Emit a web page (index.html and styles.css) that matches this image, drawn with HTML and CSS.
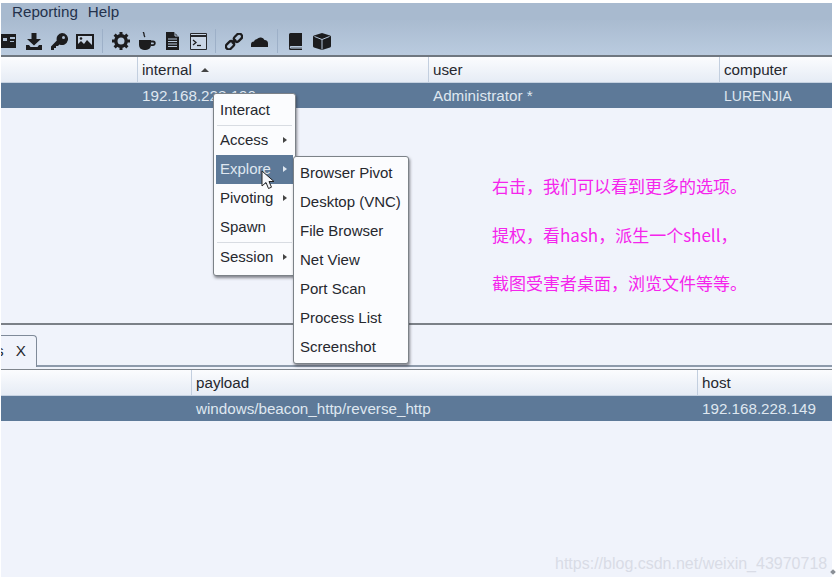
FILE: index.html
```html
<!DOCTYPE html>
<html lang="en">
<head>
  <meta charset="UTF-8">
  <title>Cobalt Strike</title>
  <link rel="stylesheet" href="styles.css">
</head>
<body>
  <div class="window">
    <div class="menubar">
      <span class="menu">Reporting</span>
      <span class="menu">Help</span>
    </div>

    <div class="toolbar">
      <!-- listeners card -->
      <svg width="15" height="14" viewBox="0 0 15 14"><path d="M0 0h15v14H0z" fill="#1c1c1e"/><path d="M2 4h4v3H2zM9 3h5v2H9zM9 7h4v1H9z" fill="#aebfd4"/></svg>
      <!-- download -->
      <svg class="gap10" width="16" height="17" viewBox="0 0 16 17"><path d="M5.500 0h5v6H15l-7 6.500L1 6h4.500z" fill="#1c1c1e"/><path d="M0 12h3l1.500 2h7L13 12h3v5H0z" fill="#1c1c1e"/></svg>
      <!-- key -->
      <svg width="17" height="17" viewBox="0 0 17 17"><path d="M11 0a6 6 0 1 1-2.600 11.400L7 13H5v2H3v2H0v-3.500l5.800-6A6 6 0 0 1 11 0z" fill="#1c1c1e"/><circle cx="12.500" cy="4.500" r="1.500" fill="#aebfd4"/></svg>
      <!-- picture -->
      <svg class="gap8" width="18" height="15" viewBox="0 0 18 15"><path d="M0 0h18v15H0z" fill="#1c1c1e"/><path d="M2 2h14v11H2z" fill="#c5d2e2"/><path d="M2 13V10l3-3 3 3 3-4 5 5v2z" fill="#1c1c1e"/><circle cx="5" cy="4.500" r="1.300" fill="#1c1c1e"/></svg>
      <i class="sep gap8"></i>
      <!-- gear -->
      <svg width="18" height="18" viewBox="0 0 18 18"><circle cx="9" cy="9" r="5.200" fill="none" stroke="#1c1c1e" stroke-width="3.400"/><path d="M9 0v4M9 14v4M0 9h4M14 9h4M2.600 2.600l2.800 2.800M12.600 12.600l2.800 2.800M15.400 2.600l-2.800 2.800M5.400 12.600l-2.800 2.800" stroke="#1c1c1e" stroke-width="3"/></svg>
      <!-- cup with steam -->
      <svg width="17" height="18" viewBox="0 0 17 18"><path d="M0 8h12v5a5 5 0 0 1-5 5H5a5 5 0 0 1-5-5z" fill="#1c1c1e"/><path d="M12 9.500h2a1.800 1.800 0 0 1 0 3.600h-2" fill="none" stroke="#1c1c1e" stroke-width="1.800"/><path d="M4 0c2 1.500 0 3 2 5" fill="none" stroke="#1c1c1e" stroke-width="1.300"/></svg>
      <!-- text document -->
      <svg class="gap10" width="13" height="18" viewBox="0 0 13 18"><path d="M0 0h8l5 5v13H0z" fill="#1c1c1e"/><path d="M9 .5v3.500h3.500" fill="none" stroke="#b5c6da"/><path d="M2 7h9M2 9.500h9M2 12h9M2 14.500h9" stroke="#b5c6da"/></svg>
      <!-- console -->
      <svg class="gap11" width="17" height="17" viewBox="0 0 17 17"><path d="M.5.500h16v16H.5z" fill="#c9d6e6" stroke="#26282c"/><path d="M.5 3h16" stroke="#26282c" stroke-width="2"/><path d="M3 7l3 2.500L3 12" fill="none" stroke="#1c1c1e" stroke-width="1.300"/><path d="M7 12.500h4" stroke="#1c1c1e" stroke-width="1.300"/></svg>
      <i class="sep gap8"></i>
      <!-- chain link -->
      <svg width="18" height="17" viewBox="0 0 18 17"><g fill="none" stroke="#1c1c1e" stroke-width="2.300"><rect x="8.500" y="1.800" width="9" height="5.800" rx="2.900" transform="rotate(-45 13 4.700)"/><rect x=".5" y="9.400" width="9" height="5.800" rx="2.900" transform="rotate(-45 5 12.300)"/><path d="M7 10.500l4-4"/></g></svg>
      <!-- cloud -->
      <svg class="gap8" width="17" height="12" viewBox="0 0 17 12"><path d="M0 12V9.500A3 3 0 0 1 3 6.500 4 4 0 0 1 6 4 4.500 4.500 0 0 1 13.500 5 3.500 3.500 0 0 1 17 8.500V12z" fill="#1c1c1e"/></svg>
      <i class="sep"></i>
      <!-- book -->
      <svg class="gap11" width="13" height="17" viewBox="0 0 13 17"><path d="M0 1.500A1.500 1.500 0 0 1 1.500 0H13v13H2a1 1 0 0 0 0 2.500h11V17H1.500A1.500 1.500 0 0 1 0 15.500z" fill="#1c1c1e"/><path d="M2 14.200h11v1.300H2z" fill="#7f8a99"/></svg>
      <!-- cube -->
      <svg class="gap11" width="18" height="17" viewBox="0 0 18 17"><path d="M9 0l8 2.500q1 .4 1 1.500v9q0 1-1 1.500L9 17l-8-2.500Q0 14 0 13V4q0-1.100 1-1.500z" fill="#1c1c1e"/><path d="M1.500 3.500L9 6.500l7.500-3M9 6.500V16.500" fill="none" stroke="#b5c6da" stroke-width="1"/></svg>
    </div>

    <div class="table">
      <div class="thead">
        <div class="th col-id"></div>
        <div class="th col-internal">internal <span class="sort-arrow"></span></div>
        <div class="th col-user">user</div>
        <div class="th">computer</div>
      </div>
      <div class="tr">
        <div class="td col-id"></div>
        <div class="td col-internal">192.168.228.190</div>
        <div class="td col-user">Administrator *</div>
        <div class="td col-computer">LURENJIA</div>
      </div>
    </div>

    <div class="tabs">
      <div class="tab"><span class="tab-rest">s</span><span>X</span></div>
    </div>

    <div class="table bottom-table">
      <div class="thead">
        <div class="th col-listener"></div>
        <div class="th col-payload">payload</div>
        <div class="th">host</div>
      </div>
      <div class="tr">
        <div class="td col-listener"></div>
        <div class="td col-payload">windows/beacon_http/reverse_http</div>
        <div class="td">192.168.228.149</div>
      </div>
    </div>
  </div>

  <ul class="popup main-menu">
    <li>Interact</li>
    <li class="rule"></li>
    <li class="more">Access</li>
    <li class="more active">Explore</li>
    <li class="more">Pivoting</li>
    <li>Spawn</li>
    <li class="rule"></li>
    <li class="more">Session</li>
  </ul>

  <ul class="popup sub-menu">
    <li>Browser Pivot</li>
    <li>Desktop (VNC)</li>
    <li>File Browser</li>
    <li>Net View</li>
    <li>Port Scan</li>
    <li>Process List</li>
    <li>Screenshot</li>
  </ul>

  <svg class="pointer" width="15" height="21" viewBox="0 0 15 21"><path d="M1 1v15l4-3.500 2.500 6 3-1.300-2.500-5.700h5z" fill="#f4f6fa" stroke="#222" stroke-width="1"/></svg>

  <div class="notes">
    <p>右击，我们可以看到更多的选项。</p>
    <p>提权，看hash，派生一个shell，</p>
    <p>截图受害者桌面，浏览文件等等。</p>
  </div>

  <div class="watermark">https://blog.csdn.net/weixin_43970718</div>
  <i class="corner-mark"></i>
</body>
</html>
```
FILE: styles.css
```css
html, body { margin: 0; padding: 0; height: 100%; }
body { background: #fff; font-family: "Liberation Sans", Arial, sans-serif; font-size: 15.200px; color: #26282e; overflow: hidden; }

.window { margin: 3px 4px 0 1px; height: 574px; background: #f0f3fb; display: flex; flex-direction: column; overflow: hidden; }

/* menu + tool bars read as one gradient */
.menubar { height: 17px; padding-left: 11px; display: flex; gap: 10px; align-items: center; background: #a8bacf; color: #24324c; }
.toolbar { height: 37px; box-sizing: border-box; padding-top: 7px; display: flex; align-items: center; gap: 9px; background: linear-gradient(#a9bbd0, #bacbdf); border-bottom: 2px solid #6f7780; }
.toolbar svg { flex: none; }
.sep { width: 1px; height: 24px; background: #9db0c8; }
.gap8 { margin-left: -1px; }
.gap10 { margin-left: 1px; }
.gap11 { margin-left: 2px; }

.table { display: flex; flex-direction: column; }
.thead { height: 25px; display: flex; background: linear-gradient(#fbfcfe, #e6ecf5); border-bottom: 1px solid #c6d2e1; }
.th { padding-left: 4px; line-height: 26px; border-right: 1px solid #c3cfdf; }
.th:last-child { border-right: 0; flex: 1; }
.tr { height: 25px; display: flex; background: #5d7998; color: #dfe7f0; line-height: 26px; }
.td { padding-left: 4px; border-right: 1px solid transparent; }
.td:last-child { flex: 1; }

.col-id { width: 132px; }
.col-internal { width: 286px; }
.col-user { width: 286px; }
.col-computer { font-size: 14px; }
.col-listener { width: 186px; }
.col-payload { width: 501px; }

.sort-arrow { display: inline-block; margin: 0 0 3px 5px; border: 4px solid transparent; border-top: 0; border-bottom: 4px solid #444; }

.tabs { margin-top: 215px; height: 40px; margin-bottom: 2px; border-top: 2px solid #7b8087; border-bottom: 2px solid #8d9aab; display: flex; align-items: flex-end; }
.tab { width: 36px; height: 32px; margin-bottom: -2px; padding: 0 10px 3px 0; box-sizing: border-box; background: #f0f3fb; border: 1px solid #7f8a99; border-left: 0; border-bottom: 0; border-top-right-radius: 4px; display: flex; justify-content: space-between; align-items: center; }
.tab-rest { margin-left: -5px; }

.bottom-table { flex: 1; border-top: 1px solid #7f858c; }

/* popup menus float above the tables */
.popup { position: absolute; margin: 0; padding: 0; list-style: none; font-size: 15px; background: #fbfcfe; border: 1px solid #7c8288; border-radius: 3px; box-shadow: 1px 2px 3px rgba(40, 40, 50, .55); }
.popup li { height: 29px; line-height: 27px; padding-left: 6px; white-space: nowrap; position: relative; }
.main-menu { left: 213px; top: 93px; width: 81px; padding: 2px 0; height: 177px; }
.main-menu li { margin: 0 2px; padding-left: 4px; }
.main-menu li.rule { height: 1px; background: #d8dce2; margin: 0 3px; padding: 0; }
.main-menu .more::after { content: ""; position: absolute; right: 6px; top: 11px; border: 3px solid transparent; border-right: 0; border-left: 4px solid #444; }
.main-menu .active { background: #5d7998; color: #dfe7f0; }
.main-menu .active::after { border-left-color: #dfe7f0; }
.sub-menu { left: 293px; top: 156px; width: 116px; height: 208px; padding-top: 2px; box-sizing: border-box; }

.pointer { position: absolute; left: 261px; top: 170px; }

.notes { position: absolute; left: 492px; top: 174px; color: #f524ec; font-family: "Noto Sans CJK SC", "Noto Sans", sans-serif; font-size: 17px; line-height: 24px; }
.notes p { margin: 0 0 24.500px; }

.watermark { position: absolute; left: 555px; top: 555px; color: #d9dce6; font-size: 16px; }
.corner-mark { position: absolute; left: 831px; top: 570px; width: 4px; height: 4px; background: #8a8f96; transform: rotate(45deg); }
```
